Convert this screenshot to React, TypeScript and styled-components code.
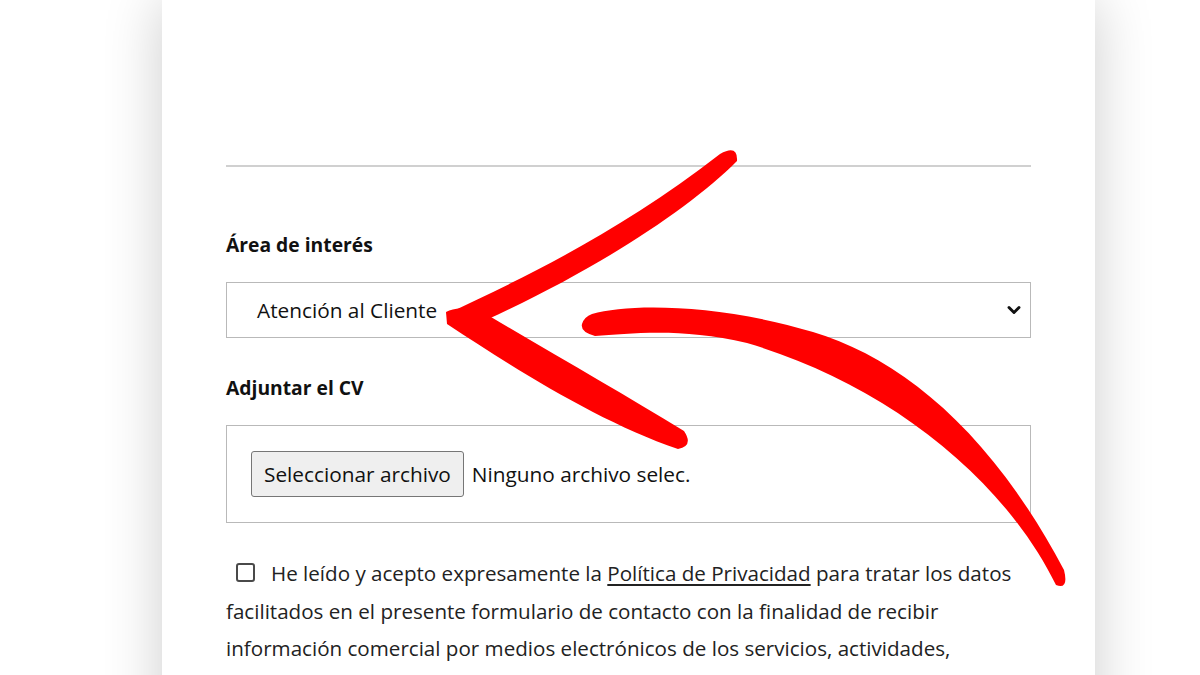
import styled, { createGlobalStyle } from "styled-components";
import { ChevronDown } from "lucide-react";

const GlobalStyle = createGlobalStyle`
    html, body {
        margin: 0;
        padding: 0;
        background: #ffffff;
        overflow: hidden;
    }
    body {
        font-family: 'Open Sans', 'Noto Sans', sans-serif;
        color: #222;
    }
`;

const Page = styled.div`
    position: relative;
    width: 1200px;
    height: 675px;
    overflow: hidden;
    background: #fff;
`;

const Card = styled.section`
    margin-left: 162px;
    width: 933px;
    min-height: 100%;
    box-sizing: border-box;
    padding: 165px 64px 40px;
    background: #fff;
    box-shadow: 0 0 55px rgba(0, 0, 0, 0.2);
`;

const Divider = styled.hr`
    margin: 0;
    border: none;
    border-top: 2px solid #d0d0d0;
`;

const Label = styled.label<{ $top: number }>`
    display: block;
    margin-top: ${(p) => p.$top}px;
    font-weight: 700;
    font-size: 19.3px;
    line-height: 30px;
    color: #111;
`;

const Select = styled.div`
    margin-top: 22px;
    height: 56px;
    box-sizing: border-box;
    border: 1px solid #b9b9b9;
    display: flex;
    align-items: center;
    justify-content: space-between;
    padding: 0 6px 0 30px;
    font-size: 20.8px;
    color: #111;
`;

const FileBox = styled.div`
    margin-top: 22px;
    height: 98px;
    box-sizing: border-box;
    border: 1px solid #b9b9b9;
    display: flex;
    align-items: center;
    gap: 8px;
    padding: 0 24px;
    font-size: 20.8px;
    color: #111;
`;

const FileButton = styled.button`
    height: 46px;
    padding: 0 12px;
    font-family: inherit;
    font-size: 20.8px;
    color: #111;
    background: #efefef;
    border: 1px solid #767676;
    border-radius: 3px;
`;

const Consent = styled.p`
    margin: 32px 0 0;
    font-size: 20.6px;
    line-height: 37.5px;
    color: #222;
`;

const Check = styled.span`
    display: inline-block;
    width: 15px;
    height: 15px;
    margin: 0 16px 0 10px;
    border: 2px solid #4a4a4a;
    border-radius: 3px;
    vertical-align: -1px;
`;

const PolicyLink = styled.a`
    color: #222;
    text-decoration: underline;
    text-underline-offset: 3px;
`;

const Scribble = styled.svg`
    position: absolute;
    left: 0;
    top: 0;
    pointer-events: none;
`;

export default function App() {
    return (
        <Page>
            <GlobalStyle />
            <Card>
                <Divider />
                <Label $top={63}>Área de interés</Label>
                <Select>
                    <span>Atención al Cliente</span>
                    <ChevronDown size={20} strokeWidth={3.5} color="#111" />
                </Select>
                <Label $top={35}>Adjuntar el CV</Label>
                <FileBox>
                    <FileButton>Seleccionar archivo</FileButton>
                    <span>Ninguno archivo selec.</span>
                </FileBox>
                <Consent>
                    <Check />
                    He leído y acepto expresamente la{" "}
                    <PolicyLink>Política de Privacidad</PolicyLink> para tratar
                    los datos facilitados en el presente formulario de contacto
                    con la finalidad de recibir información comercial por medios
                    electrónicos de los servicios, actividades, eventos y
                    novedades.
                </Consent>
            </Card>
            <Scribble width="1200" height="675" viewBox="0 0 1200 675">
                <path
                    fill="#ff0000"
                    d="M446,314 C520,280 620,232 720,154 Q738,144 737,161 C690,208 600,268 486,320 Z"
                />
                <path
                    fill="#ff0000"
                    d="M446,312 Q460,304 486,314 C560,358 622,393 684,431 Q694,446 678,449 C600,422 520,372 447,324 Z"
                />
                <path
                    fill="#ff0000"
                    d="M592,314 C630,303 720,304 813,332 C900,358 990,430 1064,570 Q1069,590 1056,585 C1000,472 880,382 747,343 C680,327 630,334 595,336 Q580,332 582,324 Q584,317 592,314 Z"
                />
            </Scribble>
        </Page>
    );
}
